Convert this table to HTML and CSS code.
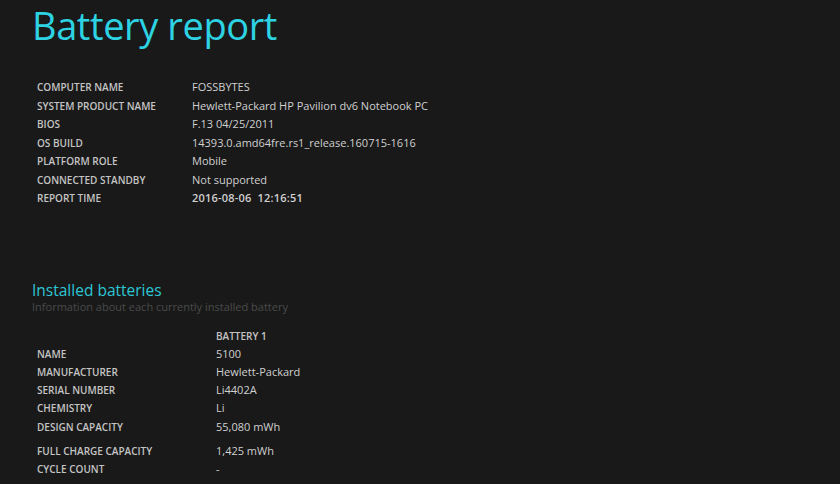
FILE: index.html
```html
<!DOCTYPE html>
<html lang="en">
<head>
    <meta charset="UTF-8">
    <title>Battery report</title>
    <link rel="stylesheet" href="styles.css">
</head>
<body>
    <h1>Battery report</h1>

    <!-- System info -->
    <table class="info">
        <tr><td class="label">COMPUTER NAME</td><td>FOSSBYTES</td></tr>
        <tr><td class="label">SYSTEM PRODUCT NAME</td><td>Hewlett-Packard HP Pavilion dv6 Notebook PC</td></tr>
        <tr><td class="label">BIOS</td><td>F.13 04/25/2011</td></tr>
        <tr><td class="label">OS BUILD</td><td>14393.0.amd64fre.rs1_release.160715-1616</td></tr>
        <tr><td class="label">PLATFORM ROLE</td><td>Mobile</td></tr>
        <tr><td class="label">CONNECTED STANDBY</td><td>Not supported</td></tr>
        <tr><td class="label">REPORT TIME</td><td class="time">2016-08-06 &nbsp;12:16:51</td></tr>
    </table>

    <h2>Installed batteries</h2>
    <div class="subtitle">Information about each currently installed battery</div>

    <!-- Batteries -->
    <table class="batteries">
        <tr><td></td><td class="label">BATTERY 1</td></tr>
        <tr><td class="label">NAME</td><td>5100</td></tr>
        <tr><td class="label">MANUFACTURER</td><td>Hewlett-Packard</td></tr>
        <tr><td class="label">SERIAL NUMBER</td><td>Li4402A</td></tr>
        <tr><td class="label">CHEMISTRY</td><td>Li</td></tr>
        <tr><td class="label">DESIGN CAPACITY</td><td>55,080 mWh</td></tr>
        <tr class="spaced"><td class="label">FULL CHARGE CAPACITY</td><td>1,425 mWh</td></tr>
        <tr><td class="label">CYCLE COUNT</td><td>-</td></tr>
    </table>
</body>
</html>
```
FILE: styles.css
```css
body {
    margin: 0;
    padding: 0 0 0 32px;
    background-color: #191919;
    color: #d0d0d0;
    font-family: 'Open Sans', 'Noto Sans', sans-serif;
    overflow: hidden;
}

h1 {
    margin: -3px 0 0 0;
    font-size: 38px;
    font-weight: 400;
    color: #2dd3e2;
    line-height: 56px;
    letter-spacing: -0.4px;
}

table {
    border-collapse: collapse;
}

td {
    padding: 0;
    font-size: 11px;
    line-height: 18.5px;
    white-space: nowrap;
    vertical-align: middle;
}

.label {
    font-size: 10px;
    font-weight: 600;
    color: #c4c4c4;
}

.info {
    margin: 25px 0 0 5px;
}

.info .label {
    width: 155px;
}

.time {
    font-weight: 600;
    letter-spacing: 0.2px;
}

h2 {
    margin: 72px 0 0 0;
    font-size: 15.5px;
    font-weight: 400;
    color: #2dc6d4;
    line-height: 20px;
}

.subtitle {
    font-size: 11px;
    color: #4a4a4a;
    line-height: 14px;
}

.batteries {
    margin: 13px 0 0 5px;
}

.batteries td {
    line-height: 18.2px;
}

.batteries td:first-child {
    width: 179px;
}

.batteries tr.spaced td {
    padding-top: 6.5px;
}
```
